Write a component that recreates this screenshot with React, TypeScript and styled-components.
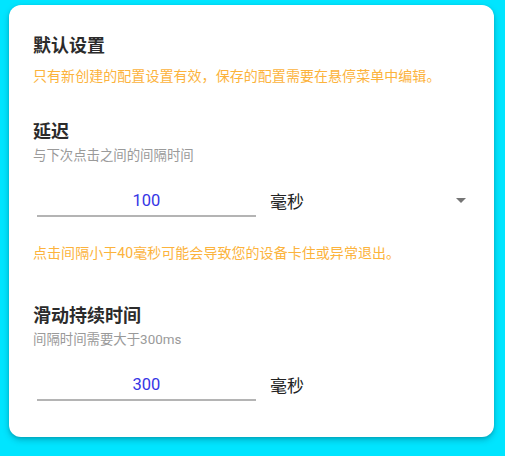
import React from "react";
import styled, { createGlobalStyle } from "styled-components";

const Global = createGlobalStyle`
  html, body { margin: 0; padding: 0; }
  body {
    background: #00e5ff;
    font-family: Roboto, "Noto Sans CJK SC", "Noto Sans", sans-serif;
    width: 505px;
    height: 456px;
    overflow: hidden;
  }
`;

const Page = styled.div`
  padding: 5px 11px 0 9px;
`;

const Card = styled.div`
  background: #ffffff;
  border-radius: 12px;
  box-shadow: 0 3px 6px rgba(0, 80, 100, 0.35), 0 1px 3px rgba(0, 0, 0, 0.12);
  padding: 29px 24px 36px 24px;
  height: 432px;
  box-sizing: border-box;
  display: flex;
  flex-direction: column;
`;

const Section = styled.section<{ $gap: number }>`
  display: flex;
  flex-direction: column;
  margin-top: ${(p) => p.$gap}px;
`;

const Title = styled.h2`
  margin: 0;
  font-family: Roboto, "Noto Sans CJK SC", sans-serif;
  font-size: 18px;
  line-height: 24px;
  font-weight: 700;
  color: #2b2b2b;
`;

const Note = styled.p<{ $mt: number }>`
  margin: ${(p) => p.$mt}px 0 0 0;
  font-size: 14px;
  line-height: 20px;
  letter-spacing: 0.05px;
  color: #fcb33c;
`;

const Desc = styled.p`
  margin: 3px 0 0 0;
  font-size: 13.4px;
  line-height: 18px;
  color: #9a9a9a;
`;

const InputRow = styled.div`
  display: flex;
  align-items: center;
  margin-top: 20px;
  height: 32px;
  padding-left: 4px;
`;

const Field = styled.div`
  width: 219px;
  height: 32px;
  box-sizing: border-box;
  border-bottom: 2px solid #b4b4b4;
  display: flex;
  align-items: center;
  justify-content: center;
  font-size: 16.5px;
  color: #3535e5;
`;

const UnitSelect = styled.div<{ $arrow: boolean }>`
  flex: ${(p) => (p.$arrow ? 1 : "none")};
  display: flex;
  align-items: center;
  justify-content: space-between;
  margin-left: 14px;
  margin-top: -2px;
  font-size: 17px;
  color: #222;
`;

const Arrow = styled.svg`
  width: 24px;
  height: 24px;
  fill: #757575;
  margin-right: -3px;
`;

const Block = ({ value, arrow }: { value: string; arrow: boolean }) => (
  <InputRow>
    <Field>{value}</Field>
    <UnitSelect $arrow={arrow}>
      <span>毫秒</span>
      {arrow && (
        <Arrow viewBox="0 0 24 24">
          <path d="M7 10l5 5 5-5z" />
        </Arrow>
      )}
    </UnitSelect>
  </InputRow>
);

export default function App() {
  return (
    <>
      <Global />
      <Page>
        <Card>
          <Section $gap={0}>
            <Title>默认设置</Title>
            <Note $mt={8}>只有新创建的配置设置有效，保存的配置需要在悬停菜单中编辑。</Note>
          </Section>
          <Section $gap={34}>
            <Title>延迟</Title>
            <Desc>与下次点击之间的间隔时间</Desc>
            <Block value="100" arrow={true} />
            <Note $mt={26}>点击间隔小于40毫秒可能会导致您的设备卡住或异常退出。</Note>
          </Section>
          <Section $gap={41}>
            <Title>滑动持续时间</Title>
            <Desc>间隔时间需要大于300ms</Desc>
            <Block value="300" arrow={false} />
          </Section>
        </Card>
      </Page>
    </>
  );
}
